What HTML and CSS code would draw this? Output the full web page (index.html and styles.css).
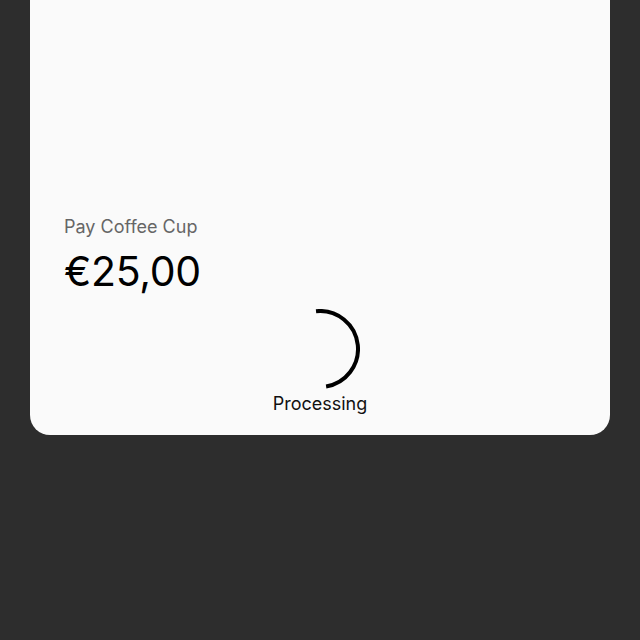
FILE: index.html
```html
<!DOCTYPE html>
<html>
<head>
<meta charset="utf-8">
<link rel="stylesheet" href="styles.css">
</head>
<body>
<div class="card">
  <div class="label">Pay Coffee Cup</div>
  <div class="amount">€25,00</div>
  <div class="status">
    <svg class="spinner" width="80" height="80" viewBox="0 0 80 80">
      <circle cx="40" cy="40" r="38" fill="none" stroke="#000" stroke-width="4" stroke-dasharray="117 200" transform="rotate(-96 40 40)"/>
    </svg>
    <div class="status-text">Processing</div>
  </div>
</div>
</body>
</html>
```
FILE: styles.css
```css
html, body {
  margin: 0;
  padding: 0;
}
body {
  background: #2d2d2d;
  width: 640px;
  height: 640px;
  font-family: Inter, "DejaVu Sans", sans-serif;
}
.card {
  margin: 0 30px;
  height: 435px;
  box-sizing: border-box;
  background: #fafafa;
  border-radius: 0 0 20px 20px;
  padding: 0 34px 20px;
  display: flex;
  flex-direction: column;
  justify-content: flex-end;
}
.label {
  font-size: 18px;
  line-height: 24px;
  color: #666666;
}
.amount {
  margin-top: 8px;
  font-size: 41px;
  line-height: 48px;
  color: #000;
  letter-spacing: -0.3px;
}
.status {
  margin-top: 14px;
  display: flex;
  flex-direction: column;
  align-items: center;
  gap: 4px;
}
.spinner {
  display: block;
}
.status-text {
  font-size: 18px;
  line-height: 22px;
  color: #111;
}
```
